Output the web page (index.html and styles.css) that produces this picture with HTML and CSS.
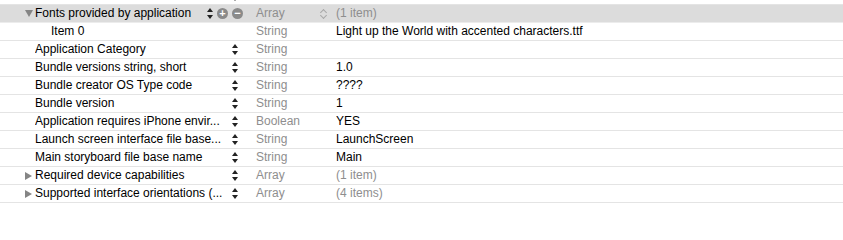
FILE: index.html
```html
<!DOCTYPE html>
<html>
<head>
    <meta charset="UTF-8">
    <title>Info.plist</title>
    <link rel="stylesheet" href="styles.css">
</head>
<body>
    <div class="plist">
        <div class="row row-cut">
            <div class="disclosure"></div>
            <div class="key"><span class="key-text"></span><span class="controls"><span class="stepper"></span></span></div>
            <div class="type"></div>
            <div class="value"></div>
        </div>
        <div class="row selected">
            <div class="disclosure"><span class="tri-down"></span></div>
            <div class="key"><span class="key-text">Fonts provided by application</span><span class="controls controls-wide"><span class="stepper"></span><span class="circle-btn">+</span><span class="circle-btn">&minus;</span></span></div>
            <div class="type">Array<span class="chevrons"></span></div>
            <div class="value muted">(1 item)</div>
        </div>
        <div class="row">
            <div class="disclosure"></div>
            <div class="key child"><span class="key-text">Item 0</span></div>
            <div class="type">String</div>
            <div class="value">Light up the World with accented characters.ttf</div>
        </div>
        <div class="row">
            <div class="disclosure"></div>
            <div class="key"><span class="key-text">Application Category</span><span class="controls"><span class="stepper"></span></span></div>
            <div class="type">String</div>
            <div class="value"></div>
        </div>
        <div class="row">
            <div class="disclosure"></div>
            <div class="key"><span class="key-text">Bundle versions string, short</span><span class="controls"><span class="stepper"></span></span></div>
            <div class="type">String</div>
            <div class="value">1.0</div>
        </div>
        <div class="row">
            <div class="disclosure"></div>
            <div class="key"><span class="key-text">Bundle creator OS Type code</span><span class="controls"><span class="stepper"></span></span></div>
            <div class="type">String</div>
            <div class="value">????</div>
        </div>
        <div class="row">
            <div class="disclosure"></div>
            <div class="key"><span class="key-text">Bundle version</span><span class="controls"><span class="stepper"></span></span></div>
            <div class="type">String</div>
            <div class="value">1</div>
        </div>
        <div class="row">
            <div class="disclosure"></div>
            <div class="key"><span class="key-text">Application requires iPhone envir...</span><span class="controls"><span class="stepper"></span></span></div>
            <div class="type">Boolean</div>
            <div class="value">YES</div>
        </div>
        <div class="row">
            <div class="disclosure"></div>
            <div class="key"><span class="key-text">Launch screen interface file base...</span><span class="controls"><span class="stepper"></span></span></div>
            <div class="type">String</div>
            <div class="value">LaunchScreen</div>
        </div>
        <div class="row">
            <div class="disclosure"></div>
            <div class="key"><span class="key-text">Main storyboard file base name</span><span class="controls"><span class="stepper"></span></span></div>
            <div class="type">String</div>
            <div class="value">Main</div>
        </div>
        <div class="row">
            <div class="disclosure"><span class="tri-right"></span></div>
            <div class="key"><span class="key-text">Required device capabilities</span><span class="controls"><span class="stepper"></span></span></div>
            <div class="type">Array</div>
            <div class="value muted">(1 item)</div>
        </div>
        <div class="row">
            <div class="disclosure"><span class="tri-right"></span></div>
            <div class="key"><span class="key-text">Supported interface orientations (...</span><span class="controls"><span class="stepper"></span></span></div>
            <div class="type">Array</div>
            <div class="value muted">(4 items)</div>
        </div>
    </div>
</body>
</html>
```

FILE: styles.css
```css
body {
    font-family: "Liberation Sans", Arial, Helvetica, sans-serif;
    margin: 0;
    background-color: white;
    color: #000;
    overflow: hidden;
}

.plist {
    font-size: 12px;
}

.row {
    display: grid;
    grid-template-columns: 35px 221px 80px 1fr;
    height: 17px;
    line-height: 17px;
    border-bottom: 1px solid #e4e4e4;
}
.row-cut {
    margin-top: -13px;
}
.row.selected {
    background-color: #dcdcdc;
    border-bottom-color: #ececec;
}

.disclosure {
    display: flex;
    align-items: center;
    justify-content: flex-end;
    padding-right: 2px;
}
.tri-down {
    width: 0;
    height: 0;
    border-left: 4px solid transparent;
    border-right: 4px solid transparent;
    border-top: 7px solid #858585;
}
.tri-right {
    width: 0;
    height: 0;
    border-top: 4px solid transparent;
    border-bottom: 4px solid transparent;
    border-left: 7px solid #858585;
    margin-right: 1px;
}

.key {
    display: flex;
    align-items: center;
    min-width: 0;
}
.key.child {
    padding-left: 16px;
}
.key-text {
    flex: 1;
    white-space: nowrap;
    overflow: hidden;
}
.controls {
    display: flex;
    align-items: center;
    gap: 4px;
    margin-right: 18px;
}
.controls-wide {
    margin-right: 13px;
}

.stepper {
    display: block;
    width: 7px;
    height: 11px;
    position: relative;
}
.stepper::before,
.stepper::after {
    content: "";
    position: absolute;
    left: 0.5px;
    border-left: 3px solid transparent;
    border-right: 3px solid transparent;
}
.stepper::before {
    top: 0;
    border-bottom: 4px solid #222;
}
.stepper::after {
    bottom: 0;
    border-top: 4px solid #222;
}

.circle-btn {
    display: flex;
    align-items: center;
    justify-content: center;
    width: 11px;
    height: 11px;
    border-radius: 50%;
    background-color: #8a8a8a;
    color: white;
    font-size: 11px;
    font-weight: bold;
    line-height: 11px;
}

.type {
    color: #8e8e8e;
    display: flex;
    align-items: center;
    padding-right: 8px;
}
.chevrons {
    margin-left: auto;
    width: 8px;
    height: 12px;
    position: relative;
}
.chevrons::before,
.chevrons::after {
    content: "";
    position: absolute;
    left: 1px;
    width: 4px;
    height: 4px;
    border-left: 1px solid #a8a8a8;
    border-top: 1px solid #a8a8a8;
}
.chevrons::before {
    top: 2px;
    transform: rotate(45deg);
}
.chevrons::after {
    bottom: 2px;
    transform: rotate(225deg);
}

.value {
    white-space: nowrap;
    overflow: hidden;
}
.value.muted {
    color: #8e8e8e;
}
```
